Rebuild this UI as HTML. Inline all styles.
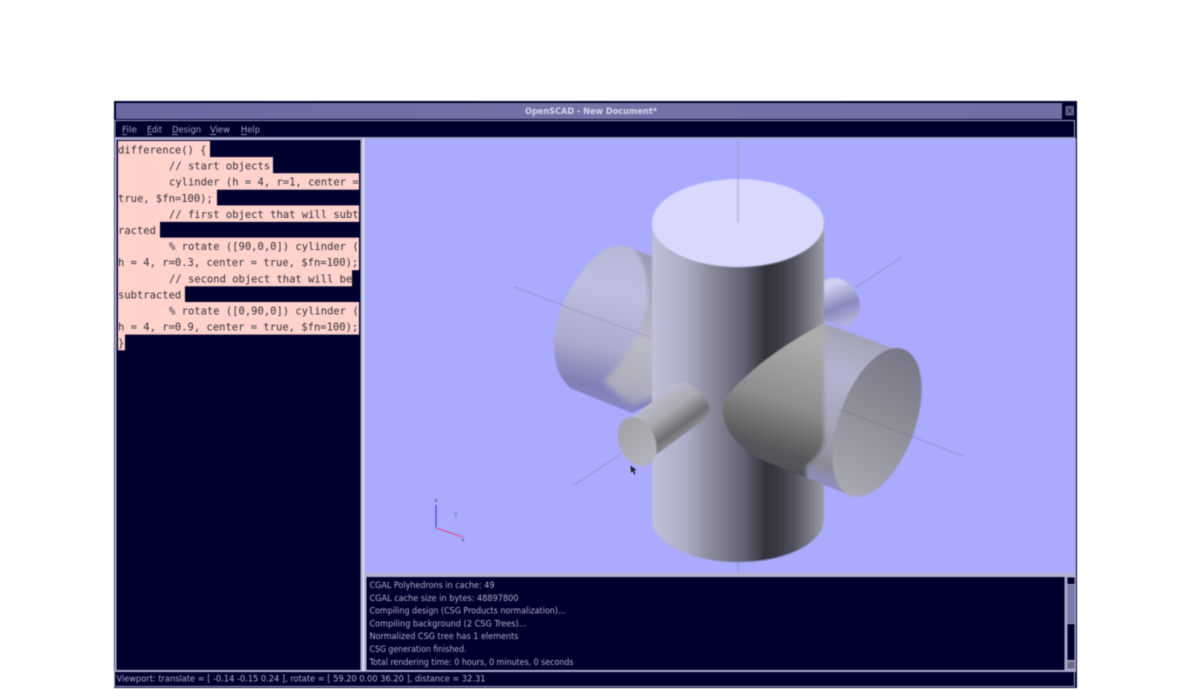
<!DOCTYPE html>
<html><head><meta charset="utf-8"><style>
html,body{margin:0;padding:0;background:#fff;width:1190px;height:689px;overflow:hidden}
svg{display:block;filter:blur(.55px)}
.c{font:10.5px "DejaVu Sans Mono","Liberation Mono",monospace;fill:#33333c;white-space:pre}
.s{font:8.6px "DejaVu Sans",sans-serif;fill:#b0b0cc}
.m{font:8.6px "DejaVu Sans",sans-serif;fill:#a8a8c8}
.t{font:bold 8.4px "DejaVu Sans",sans-serif;fill:#d6d6ee}
</style></head><body>
<svg width="1190" height="689" viewBox="0 0 1190 689" xmlns="http://www.w3.org/2000/svg">
<defs>
<linearGradient id="main" x1="652" x2="824" y1="0" y2="0" gradientUnits="userSpaceOnUse">
<stop offset="0" stop-color="#c0c0d8"/><stop offset=".2" stop-color="#acacc6"/><stop offset=".35" stop-color="#888898"/><stop offset=".53" stop-color="#626274"/><stop offset=".66" stop-color="#33333c"/><stop offset=".72" stop-color="#383842"/><stop offset=".82" stop-color="#50505e"/><stop offset="1" stop-color="#9c9ca8"/>
</linearGradient>
<linearGradient id="lbig" x1="625" y1="245" x2="590" y2="405" gradientUnits="userSpaceOnUse">
<stop offset="0" stop-color="#b8b8d6"/><stop offset=".3" stop-color="#bebee2"/><stop offset=".65" stop-color="#aaaacc"/><stop offset=".87" stop-color="#8080b6"/><stop offset="1" stop-color="#8686c6"/>
</linearGradient>
<linearGradient id="lband" x1="650" y1="255" x2="650" y2="340" gradientUnits="userSpaceOnUse">
<stop offset="0" stop-color="#9a9ab2"/><stop offset="1" stop-color="#b8b8c8"/>
</linearGradient>
<linearGradient id="lgrey" x1="640" y1="340" x2="625" y2="410" gradientUnits="userSpaceOnUse">
<stop offset="0" stop-color="#bcbcc6"/><stop offset=".7" stop-color="#acacbc"/><stop offset="1" stop-color="#9494bc"/>
</linearGradient>
<linearGradient id="rcone" x1="800" y1="335" x2="758" y2="462" gradientUnits="userSpaceOnUse">
<stop offset="0" stop-color="#adadad"/><stop offset=".5" stop-color="#8e8e8e"/><stop offset=".85" stop-color="#5a5a5c"/><stop offset="1" stop-color="#505056"/>
</linearGradient>
<linearGradient id="rbody" x1="868" y1="332" x2="815" y2="488" gradientUnits="userSpaceOnUse">
<stop offset="0" stop-color="#a0a0b2"/><stop offset=".3" stop-color="#b4b4d0"/><stop offset=".62" stop-color="#a4a4ba"/><stop offset=".85" stop-color="#8a8a96"/><stop offset="1" stop-color="#9090cc"/>
</linearGradient>
<linearGradient id="rend" x1="885" y1="350" x2="860" y2="495" gradientUnits="userSpaceOnUse">
<stop offset="0" stop-color="#787888"/><stop offset=".5" stop-color="#90909a"/><stop offset="1" stop-color="#a8a8b2"/>
</linearGradient>
<linearGradient id="sbody" x1="652" y1="395" x2="688" y2="445" gradientUnits="userSpaceOnUse">
<stop offset="0" stop-color="#c0c0d6"/><stop offset=".4" stop-color="#a8a8ae"/><stop offset=".68" stop-color="#6e6e72"/><stop offset=".85" stop-color="#929296"/><stop offset="1" stop-color="#b8b8c0"/>
</linearGradient>
<linearGradient id="send" x1="630" y1="420" x2="645" y2="465" gradientUnits="userSpaceOnUse">
<stop offset="0" stop-color="#a2a2a8"/><stop offset="1" stop-color="#b4b4bc"/>
</linearGradient>
<linearGradient id="bsmall" x1="838" y1="283" x2="853" y2="322" gradientUnits="userSpaceOnUse">
<stop offset="0" stop-color="#d0d0f0"/><stop offset=".55" stop-color="#8888bc"/><stop offset=".82" stop-color="#a4a4d2"/><stop offset="1" stop-color="#b4b4de"/>
</linearGradient>
<linearGradient id="tb" x1="0" x2="1" y1="0" y2="0">
<stop offset="0" stop-color="#6a6aa2"/><stop offset=".5" stop-color="#7373a8"/><stop offset="1" stop-color="#6f6fa6"/>
</linearGradient>
<clipPath id="vp"><rect x="366" y="139" width="710" height="434"/></clipPath>
<clipPath id="ed"><rect x="117" y="140" width="242.500" height="530"/></clipPath>
<clipPath id="leftSil"><path d="M654 257L630 248C614 241 596 252 580 274C564 296 554 320 554 345C554 364 560 378 570 388L632 413L660 400V260Z"/></clipPath>
<clipPath id="rightSil"><path d="M824 323L892 348L880 480L855 497L760 459C742 450 723 432 723 410C723 398 733 388 752 371C774 352 800 336 824 323Z"/></clipPath>
<filter id="soft" x="-5%" y="-5%" width="110%" height="110%"><feGaussianBlur stdDeviation=".6"/></filter>
<filter id="soft2" x="-20%" y="-20%" width="140%" height="140%"><feGaussianBlur stdDeviation="3"/></filter>
<filter id="soft3" x="-20%" y="-20%" width="140%" height="140%"><feGaussianBlur stdDeviation="1.800"/></filter>
</defs>

<!-- window frame -->
<rect x="114" y="101" width="963" height="587" fill="#00002e"/>
<rect x="116" y="103" width="946" height="16" fill="url(#tb)"/>
<rect x="1065.500" y="106" width="8.500" height="9.500" fill="#62628a"/>
<path d="M1067.500 108l4.500 5M1072 108l-4.500 5" stroke="#20204a" stroke-width="1" fill="none"/>
<text x="525" y="114" class="t" textLength="132" lengthAdjust="spacingAndGlyphs">OpenSCAD - New Document*</text>

<!-- menu bar -->
<rect x="115" y="120.500" width="959.500" height="17" fill="#00002e" stroke="#9c9cc0" stroke-width="1"/>
<g class="m">
<text x="122" y="132.500" textLength="15" lengthAdjust="spacingAndGlyphs">File</text>
<text x="147" y="132.500" textLength="15" lengthAdjust="spacingAndGlyphs">Edit</text>
<text x="172" y="132.500" textLength="29" lengthAdjust="spacingAndGlyphs">Design</text>
<text x="210" y="132.500" textLength="20" lengthAdjust="spacingAndGlyphs">View</text>
<text x="241" y="132.500" textLength="19" lengthAdjust="spacingAndGlyphs">Help</text>
</g>
<path d="M122 134.500h5M147 134.500h5M172 134.500h6M210 134.500h6M241 134.500h6" stroke="#8a8ab0" stroke-width="1"/>

<!-- panes frame -->
<rect x="114.500" y="138" width="961.500" height="534" fill="#adadd0"/>
<rect x="116.500" y="140" width="244" height="530" fill="#00002e"/>
<rect x="362.500" y="138" width="2" height="534" fill="#dcdcf0"/>

<!-- editor -->
<g clip-path="url(#ed)">
<g fill="#ffd2cc">
<rect x="118" y="141" width="92" height="16.500"/>
<rect x="118" y="157.100" width="155" height="16.500"/>
<rect x="118" y="173.200" width="241" height="16.500"/>
<rect x="118" y="189.300" width="99" height="16.500"/>
<rect x="118" y="205.400" width="241" height="16.500"/>
<rect x="118" y="221.500" width="42" height="16.500"/>
<rect x="118" y="237.600" width="241" height="16.500"/>
<rect x="118" y="253.700" width="241" height="16.500"/>
<rect x="118" y="269.800" width="234" height="16.500"/>
<rect x="118" y="285.900" width="67" height="16.500"/>
<rect x="118" y="302" width="241" height="16.500"/>
<rect x="118" y="318.100" width="241" height="16.500"/>
<rect x="118" y="334.200" width="7" height="16.100"/>
</g>
<g class="c">
<text x="118" y="153.500">difference() {</text>
<text x="169" y="169.600">// start objects</text>
<text x="169" y="185.700">cylinder (h = 4, r=1, center =</text>
<text x="118" y="201.800">true, $fn=100);</text>
<text x="169" y="217.900">// first object that will subt</text>
<text x="118" y="234">racted</text>
<text x="169" y="250.100">% rotate ([90,0,0]) cylinder (</text>
<text x="118" y="266.200">h = 4, r=0.3, center = true, $fn=100);</text>
<text x="169" y="282.300">// second object that will be</text>
<text x="118" y="298.400">subtracted</text>
<text x="169" y="314.500">% rotate ([0,90,0]) cylinder (</text>
<text x="118" y="330.600">h = 4, r=0.9, center = true, $fn=100);</text>
<text x="118" y="346.700">}</text>
</g>
</g>

<!-- viewport -->
<rect x="365" y="139" width="711" height="434" fill="#aaaaff"/>
<g clip-path="url(#vp)">
<g filter="url(#soft)">
<!-- axes behind -->
<g stroke="#9090d0" stroke-width="1" fill="none">
<path d="M514 287L652 338"/>
<path d="M902 257L855 288"/>
<path d="M963 456L913 437"/>
<path d="M573 486L622 453"/>
<path d="M738 562V573"/>
</g>
<!-- left big cylinder -->
<path d="M654 257L630 248C614 241 596 252 580 274C564 296 554 320 554 345C554 364 560 378 570 388L632 413L660 400V260Z" fill="url(#lbig)"/>
<g clip-path="url(#leftSil)">
<path d="M658 256L632 248C642 256 648 274 648 295C648 312 642 330 632 345L650 340L658 340Z" fill="url(#lband)" filter="url(#soft3)"/>
<path d="M656 336C645 336 638 337 632 345C624 358 614 370 604 381C612 392 622 398 632 405L660 396V336Z" fill="url(#lgrey)" filter="url(#soft2)"/>
</g>
<path d="M561 305L652 338" stroke="#9494c4" stroke-width="1" fill="none" opacity=".75"/>
<!-- back small cylinder -->
<path d="M822 282C828 277 840 276 848 283C858 291 862 303 859 313C856 321 850 326 843 326L822 320Z" fill="url(#bsmall)"/>
<!-- main cylinder -->
<path d="M652 223V519C652 543 690 562 738 562C786 562 824 543 824 519V223Z" fill="url(#main)"/>
<ellipse cx="738" cy="223" rx="86" ry="44" fill="#d9d9fc"/>
<path d="M738 139V222" stroke="#9c9cc8" stroke-width="1" fill="none"/>
<!-- right big cylinder -->
<path d="M824 323L892 348L880 480L855 497L760 459C742 450 723 432 723 410C723 398 733 388 752 371C774 352 800 336 824 323Z" fill="url(#rcone)"/>
<g clip-path="url(#rightSil)">
<path d="M824 318L900 340L910 420L860 505L806 486L806 466C818 456 824 448 824 438Z" fill="url(#rbody)" filter="url(#soft3)"/>
</g>
<ellipse cx="877" cy="422.500" rx="38" ry="78" transform="rotate(20 877 422.500)" fill="url(#rend)"/>
<path d="M842 410L913 437" stroke="#7a7a8e" stroke-width="1" fill="none" opacity=".75"/>
<path d="M824 403L842 410" stroke="#9c9cb0" stroke-width="1" fill="none" opacity=".6"/>
<!-- small front cylinder -->
<path d="M633 417L673 385C682 380 692 384 700 392C707 399 711 406 709 413C708 416 707 417 705 419L657 454C645 445 636 432 633 417Z" fill="url(#sbody)"/>
<ellipse cx="637" cy="441.500" rx="18" ry="25.500" transform="rotate(-24 637 441.500)" fill="url(#send)"/>
</g>
<!-- cursor -->
<path d="M630.500 465.500L631 473L632.800 471L634 474.500L635.500 474L634.300 470.500L636.500 470Z" fill="#22222e"/>
<!-- axis indicator -->
<path d="M436 505V528" stroke="#4a4ae0" stroke-width="1.300"/>
<path d="M436 528L463 537" stroke="#d84a80" stroke-width="1"/>
<path d="M436 528L455 515" stroke="#9ac4ee" stroke-width="1"/>
<text x="434.500" y="502" font-family="Liberation Sans,sans-serif" font-size="5.500" fill="#333355">z</text>
<text x="454.500" y="515.500" font-family="Liberation Sans,sans-serif" font-size="5.500" fill="#5a5a8a">y</text>
<text x="461.500" y="541.500" font-family="Liberation Sans,sans-serif" font-size="5.500" fill="#333355">x</text>
</g>

<!-- console -->
<rect x="365" y="573" width="711" height="4" fill="#b4b4d0"/>
<rect x="366.500" y="577" width="698" height="93" fill="#00002e"/>
<rect x="1065" y="577" width="10.500" height="93" fill="#a4a4c4"/>
<rect x="1067.500" y="577.500" width="7" height="6.500" fill="#00002e"/>
<rect x="1067.500" y="585" width="7" height="38" fill="#7878aa"/>
<rect x="1067.500" y="624" width="7" height="36" fill="#00002e"/>
<rect x="1067.500" y="661.500" width="7" height="7" fill="#6a6a80"/>
<g class="s">
<text x="369.500" y="588" textLength="125" lengthAdjust="spacingAndGlyphs">CGAL Polyhedrons in cache: 49</text>
<text x="369.500" y="600.800" textLength="149" lengthAdjust="spacingAndGlyphs">CGAL cache size in bytes: 48897800</text>
<text x="369.500" y="613.600" textLength="196" lengthAdjust="spacingAndGlyphs">Compiling design (CSG Products normalization)...</text>
<text x="369.500" y="626.400" textLength="157" lengthAdjust="spacingAndGlyphs">Compiling background (2 CSG Trees)...</text>
<text x="369.500" y="639.200" textLength="149" lengthAdjust="spacingAndGlyphs">Normalized CSG tree has 1 elements</text>
<text x="369.500" y="652" textLength="97" lengthAdjust="spacingAndGlyphs">CSG generation finished.</text>
<text x="369.500" y="664.800" textLength="204" lengthAdjust="spacingAndGlyphs">Total rendering time: 0 hours, 0 minutes, 0 seconds</text>
</g>

<!-- status bar -->
<rect x="114.500" y="671.500" width="960" height="15" fill="#00002e" stroke="#a4a4c8" stroke-width="1"/>
<text x="116.500" y="681.500" class="s" textLength="369" lengthAdjust="spacingAndGlyphs">Viewport: translate = [ -0.14 -0.15 0.24 ], rotate = [ 59.20 0.00 36.20 ], distance = 32.31</text>
</svg>
</body></html>
